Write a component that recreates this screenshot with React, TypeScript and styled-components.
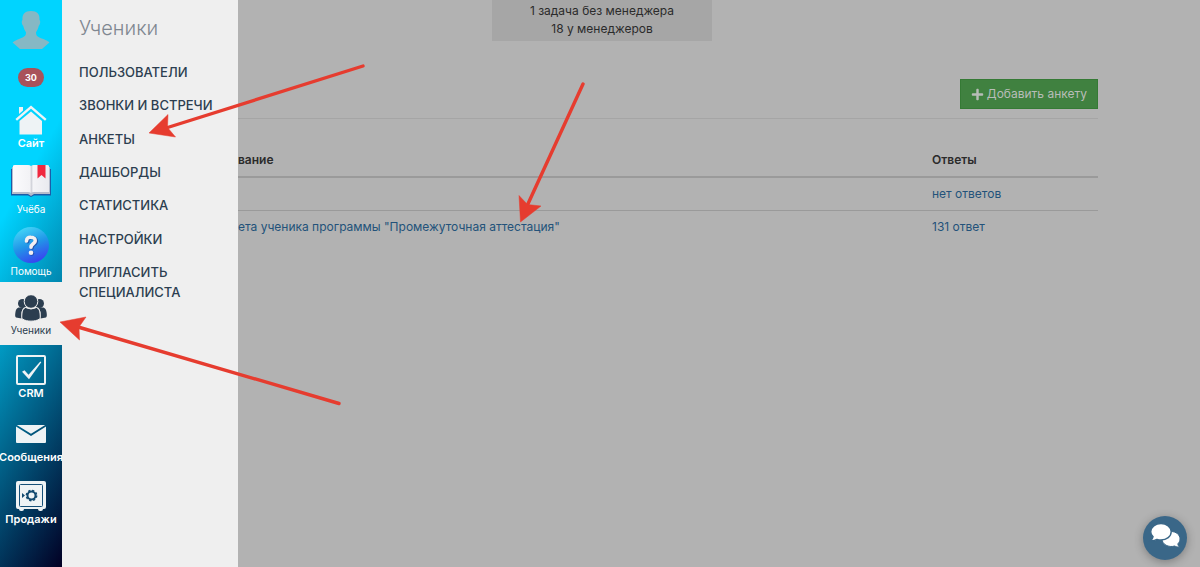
import React from "react";
import styled, { createGlobalStyle, css } from "styled-components";
import { FaPlus } from "react-icons/fa";

const GlobalStyle = createGlobalStyle`
  * { box-sizing: border-box; }
  body {
    margin: 0;
    background: #b2b2b2;
    color: #2b2b2b;
    font: 400 12px/18px Inter, "Noto Sans", sans-serif;
  }
  a { text-decoration: none; }
`;

const Shell = styled.div`
  position: relative;
  display: flex;
  min-height: 100vh;
`;

const Rail = styled.nav`
  flex: none;
  width: 62px;
  display: flex;
  flex-direction: column;
  align-items: stretch;
  background: linear-gradient(120deg, #00d4ff 33%, #020024 100%);
`;

const Profile = styled.a`
  display: flex;
  justify-content: center;
  padding-top: 11px;
`;

const Badge = styled.span`
  align-self: center;
  width: 26px;
  margin-top: 19px;
  border-radius: 10px;
  background: #a9525a;
  color: #fff;
  font-size: 9px;
  font-weight: 700;
  line-height: 19px;
  text-align: center;
`;

const RailLink = styled.a<{ $height: number; $gap?: number; $bold?: boolean; $active?: boolean }>`
  height: ${(p) => p.$height}px;
  display: flex;
  flex-direction: column;
  align-items: center;
  justify-content: flex-end;
  gap: ${(p) => p.$gap ?? 1}px;
  padding-bottom: 4px;
  color: #fff;
  font-size: ${(p) => (p.$bold ? 11 : 10)}px;
  font-weight: ${(p) => (p.$bold ? 600 : 400)};
  line-height: 14px;
  white-space: nowrap;
  ${(p) =>
    p.$active &&
    css`
      padding-bottom: 8px;
      background: #efefef;
      color: #2c3e50;
    `}
`;

const Submenu = styled.aside`
  position: absolute;
  top: 0;
  bottom: 0;
  left: 62px;
  width: 176px;
  padding: 14px 17px;
  background: #efefef;
`;

const SubmenuTitle = styled.h2`
  margin: 0 0 20px;
  color: #7f8791;
  font-size: 20px;
  font-weight: 300;
  line-height: 28px;
`;

const SubmenuList = styled.ul`
  height: 240px;
  margin: 0;
  padding: 0;
  display: flex;
  flex-direction: column;
  justify-content: space-between;
  list-style: none;
`;

const SubmenuLink = styled.a`
  display: block;
  color: #2c3e50;
  font-size: 13px;
  font-weight: 500;
  line-height: 20px;
  text-transform: uppercase;
  white-space: nowrap;
`;

const Page = styled.main`
  flex: 1;
  padding: 0 102px 0 44px;
`;

const Notice = styled.div`
  width: 220px;
  height: 41px;
  margin: 0 auto;
  padding-top: 2px;
  background: #a6a6a6;
  text-align: center;
`;

const Toolbar = styled.div`
  display: flex;
  justify-content: flex-end;
  margin-bottom: 24px;
  padding: 38px 0 9px;
  border-bottom: 1px solid #a5a5a5;
`;

const AddButton = styled.button`
  height: 30px;
  display: flex;
  align-items: center;
  gap: 3px;
  padding: 0 10px;
  border: 1px solid #357a35;
  background: #408140;
  color: #b8bdb8;
  font: inherit;
  white-space: nowrap;
`;

const Table = styled.table`
  width: 100%;
  border-collapse: collapse;
  text-align: left;
`;

const Th = styled.th<{ $name?: boolean }>`
  width: ${(p) => (p.$name ? "auto" : "174px")};
  height: 34px;
  padding: 0 8px 0 ${(p) => (p.$name ? 132 : 8)}px;
  border-bottom: 2px solid #9a9a9a;
  font-weight: 600;
`;

const Td = styled.td<{ $name?: boolean }>`
  height: 33px;
  padding: 0 8px 0 ${(p) => (p.$name ? 132 : 8)}px;

  tr + tr & {
    border-top: 1px solid #9a9a9a;
  }
`;

const TableLink = styled.a`
  color: #23527a;
`;

const ChatButton = styled.button`
  position: fixed;
  right: 13px;
  bottom: 7px;
  width: 44px;
  height: 44px;
  padding: 0;
  border: 0;
  border-radius: 50%;
  background: #3a6788;
  box-shadow: 0 2px 10px rgba(0, 0, 0, 0.3);
`;

const Arrows = styled.svg`
  position: absolute;
  top: 0;
  left: 0;
  pointer-events: none;
`;

const AvatarIcon = () => (
  <svg width="38" height="38" viewBox="0 0 38 38" fill="#86b8c4">
    <path d="M19 0c6 0 9 3 8.500 9 1.200.8.800 4.500-.7 5.800-.6 2.800-1.800 5-2.800 6.400 0 3 .8 4 3.400 5.300 4.200 1.800 8.600 3 10 5l-7.400 6.500H8L.6 31.500c1.600-2 6-3.200 10-5 2.600-1.300 3.400-2.300 3.400-5.300-1-1.400-2.200-3.600-2.800-6.400-1.500-1.300-1.900-5-.7-5.800C10 3 13 0 19 0Z" />
  </svg>
);

const HomeIcon = () => (
  <svg width="32" height="30" viewBox="0 0 32 30">
    <path d="M4 9V2h4v3.500Z" fill="#eef3f5" />
    <path d="M1.200 14.800 16 2l14.800 12.800" fill="none" stroke="#eef3f5" strokeWidth="2.400" />
    <path d="M16 6.500 27 16v13.500H4.500V16Z" fill="#eef3f5" />
  </svg>
);

const BookIcon = () => (
  <svg width="42" height="34" viewBox="0 0 42 34">
    <defs>
      <linearGradient id="page" x1="0" x2="1">
        <stop offset="0" stopColor="#fbfbfd" />
        <stop offset=".48" stopColor="#f2f2f5" />
        <stop offset=".5" stopColor="#c9cbd3" />
        <stop offset=".56" stopColor="#f4f4f7" />
        <stop offset="1" stopColor="#e9eaef" />
      </linearGradient>
    </defs>
    <path d="M1 5h40v26.500H24l-3 1.500-3-1.500H1Z" fill="#1c5ca8" />
    <path d="M2 3h38v27H24l-3 2-3-2H2Z" fill="#b6bccb" />
    <path d="M3 2Q3 1 5 1h13q2 0 3 1 1-1 3-1h13q2 0 2 1v26H24q-2 0-3 1-1-1-3-1H3Z" fill="url(#page)" />
    <path d="M27.500 1h8v13.500l-4-3.500-4 3.500Z" fill="#f0283f" />
  </svg>
);

const HelpIcon = () => (
  <svg width="36" height="36" viewBox="0 0 36 36">
    <defs>
      <linearGradient id="ball" x1=".25" x2=".65" y1="0" y2="1">
        <stop offset="0" stopColor="#45d8f8" />
        <stop offset=".5" stopColor="#2196e8" />
        <stop offset="1" stopColor="#3a40f0" />
      </linearGradient>
    </defs>
    <circle cx="18" cy="18" r="18" fill="url(#ball)" />
    <path d="M14.500 14.500c.2-3 2-4 4.500-3.800 3 .1 4.300 1.600 4.200 3.600-.1 3.200-4.200 2.900-4.200 6.500" fill="none" stroke="#203d91" strokeOpacity=".7" strokeWidth="3.800" strokeLinecap="round" />
    <path d="M13.500 14c.2-3 2-4 4.500-3.800 3 .1 4.300 1.600 4.200 3.600-.1 3.200-4.200 2.900-4.200 6.500" fill="none" stroke="#f3f0f2" strokeWidth="3.600" strokeLinecap="round" />
    <circle cx="18.700" cy="26.300" r="2.400" fill="#203d91" fillOpacity=".7" />
    <circle cx="18" cy="25.800" r="2.300" fill="#f3f0f2" />
  </svg>
);

const PeopleIcon = () => (
  <svg width="32" height="27" viewBox="0 0 32 27" fill="#2c3e50">
    <circle cx="7.500" cy="8.500" r="4.500" />
    <circle cx="24.500" cy="8.500" r="4.500" />
    <path d="M3.600 12.500h4.800L6.500 17v6.500L1 22.500C0 22 0 20 .4 17.500c.3-2.600 1.200-4.300 3.200-5ZM28.400 12.500h-4.800l1.900 4.500v6.500l5.500-1c1-.5 1-2.500.6-5-.3-2.600-1.200-4.300-3.200-5Z" />
    <circle cx="16" cy="6.500" r="6.800" stroke="#efefef" strokeWidth="1" />
    <path d="M10.500 12.500q5.500 3 11 0c2.800 1 3.300 3.500 3.600 6.500.3 3.200.2 4.500-.9 5.200-4 2.600-12.400 2.600-16.400 0-1.100-.7-1.200-2-.9-5.200.3-3 .8-5.500 3.600-6.500Z" stroke="#efefef" strokeWidth="1" />
  </svg>
);

const CrmIcon = () => (
  <svg width="30" height="30" viewBox="0 0 30 30">
    <rect x="1" y="1" width="28" height="28" rx="1" fill="none" stroke="#eef3f5" strokeWidth="2" />
    <path d="m6 16.800 2.500-1.600 4 4.600L24.300 6.500l1 .8L13 24.200Z" fill="#eef3f5" />
  </svg>
);

const MailIcon = () => (
  <svg width="30" height="18" viewBox="0 0 30 18" fill="#eef3f5">
    <path d="M.8 0h28.400L15 8.800ZM0 1.500l15 9.600 15-9.600V17q0 1-1 1H1q-1 0-1-1Z" />
  </svg>
);

const SafeIcon = () => (
  <svg width="30" height="30" viewBox="0 0 30 30">
    <path d="M2 0h26q2 0 2 2v24q0 2-2 2h-1q0 2-2 2h-1q-2 0-2-2H8q0 2-2 2H5q-2 0-2-2H2q-2 0-2-2V2Q0 0 2 0Z" fill="#eef3f5" />
    <rect x="3.500" y="3.500" width="23" height="22" rx="1" fill="none" stroke="#155078" />
    <circle cx="15.500" cy="14.500" r="4" fill="none" stroke="#124a70" strokeWidth="2" />
    <circle cx="15.500" cy="14.500" r="5.200" fill="none" stroke="#124a70" strokeWidth="1.400" strokeDasharray="2.200 1.884" />
    <path d="M6 12v5l3-2.500Z" fill="#124a70" />
  </svg>
);

const ChatIcon = () => (
  <svg width="44" height="44" viewBox="0 0 44 44" fill="#fff" stroke="#3a6788">
    <path d="M28 15.500c5 0 9 3.200 9 7.400 0 2-.9 3.700-2.200 5 .2 1.300.8 2.200 1.700 3.300-2.200 0-3.500-.5-4.800-1.200-6 1.800-12.700-1.500-12.700-7.100 0-4.200 4-7.400 9-7.400Z" strokeWidth="1" />
    <path d="M18 7.500c5.600 0 10.200 3.600 10.200 8.300S23.600 24 18 24c-1.400 0-2.800-.2-4-.6-1.500 1-3.500 1.500-6.500 1.500 1.500-1.200 2.300-2.600 2.600-4.200-1.500-1.400-2.400-3-2.400-4.900 0-4.700 4.700-8.300 10.300-8.300Z" strokeWidth="1.400" />
  </svg>
);

const sections = ["Пользователи", "Звонки и встречи", "Анкеты", "Дашборды", "Статистика", "Настройки"];

export default function App() {
  return (
    <>
      <GlobalStyle />
      <Shell>
        <Rail>
          <Profile href="#"><AvatarIcon /></Profile>
          <Badge>30</Badge>
          <RailLink href="#" $height={67} $bold><HomeIcon />Сайт</RailLink>
          <RailLink href="#" $height={66} $gap={4}><BookIcon />Учёба</RailLink>
          <RailLink href="#" $height={62}><HelpIcon />Помощь</RailLink>
          <RailLink href="#" $height={63} $active><PeopleIcon />Ученики</RailLink>
          <RailLink href="#" $height={59} $bold><CrmIcon />CRM</RailLink>
          <RailLink href="#" $height={64} $gap={7} $bold><MailIcon />Сообщения</RailLink>
          <RailLink href="#" $height={62} $bold><SafeIcon />Продажи</RailLink>
        </Rail>
        <Page>
          <Notice>
            <div>1 задача без менеджера</div>
            <div>18 у менеджеров</div>
          </Notice>
          <Toolbar>
            <AddButton type="button"><FaPlus size={13} />Добавить анкету</AddButton>
          </Toolbar>
          <Table>
            <thead>
              <tr><Th $name>вание</Th><Th>Ответы</Th></tr>
            </thead>
            <tbody>
              <tr><Td $name /><Td><TableLink href="#">нет ответов</TableLink></Td></tr>
              <tr>
                <Td $name><TableLink href="#">ета ученика программы "Промежуточная аттестация"</TableLink></Td>
                <Td><TableLink href="#">131 ответ</TableLink></Td>
              </tr>
            </tbody>
          </Table>
        </Page>
        <Submenu>
          <SubmenuTitle>Ученики</SubmenuTitle>
          <SubmenuList>
            {sections.map((name) => (
              <li key={name}><SubmenuLink href="#">{name}</SubmenuLink></li>
            ))}
            <li><SubmenuLink href="#">Пригласить<br />специалиста</SubmenuLink></li>
          </SubmenuList>
        </Submenu>
        <Arrows width="620" height="420" viewBox="0 0 620 420" fill="#e63c2f" stroke="#e63c2f">
          <path d="M363 66 166 128M583 84 527 206M339 403.500 78 327" fill="none" strokeWidth="3.400" strokeLinecap="round" />
          <path d="m149 133 19-18.500-.5 13 8 9.500ZM520.500 222 519 195.500l8.500 9 13.500 1.500ZM60 322l26-5-7 10 .5 13Z" strokeWidth=".5" />
        </Arrows>
        <ChatButton type="button" aria-label="Чат"><ChatIcon /></ChatButton>
      </Shell>
    </>
  );
}
